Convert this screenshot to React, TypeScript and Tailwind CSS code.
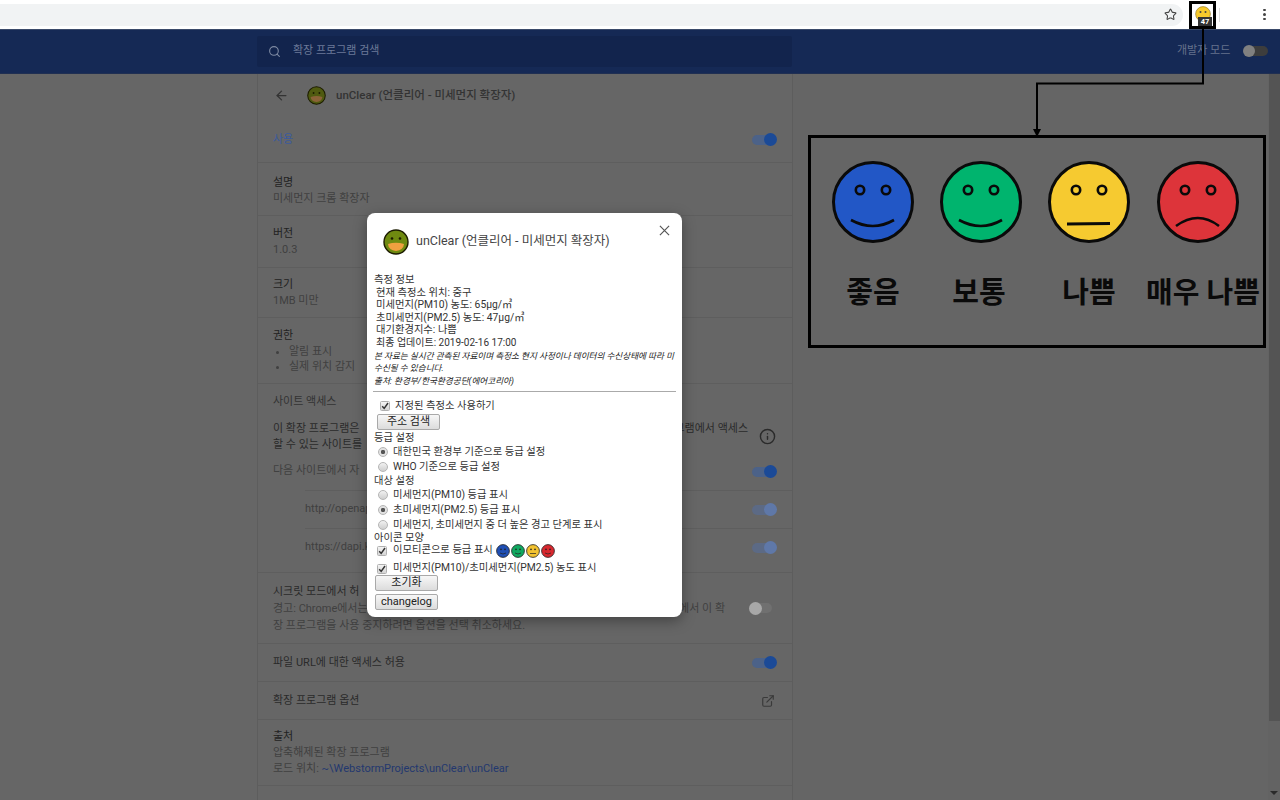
import { ArrowLeft, ExternalLink, Info, Search, Star } from "lucide-react";

const sans = "font-['Roboto','Noto_Sans_CJK_KR',sans-serif]";

function Toggle({ kind }: { kind: "on" | "dim" | "off" }) {
  const track = kind === "on" ? "bg-[#4c6288]" : kind === "dim" ? "bg-[#5c6a85]" : "bg-[#707070]";
  const knob = kind === "on" ? "bg-[#1b4a97] left-[12px]" : kind === "dim" ? "bg-[#5f78a8] left-[12px]" : "bg-[#a8a8a8] left-0";
  return (
    <div className={`relative w-[25px] h-[13px] shrink-0 ${kind === "off" ? "mr-[3px]" : ""}`}>
      <div className={`absolute left-0 top-[1.5px] w-[23px] h-[10px] rounded-full ${track}`} />
      <div className={`absolute top-0 w-[13px] h-[13px] rounded-full ${knob}`} />
    </div>
  );
}

// settings row, text on the left, control on the right
function Row({ h, children, right, line = true }: { h: string; children: React.ReactNode; right?: React.ReactNode; line?: boolean }) {
  return (
    <div className={`${h} flex items-center justify-between pl-[15px] pr-[15px] ${line ? "border-t border-[#5e5e5e]" : ""}`}>
      <div className="flex-1 leading-[16px]">{children}</div>
      {right}
    </div>
  );
}

function Face({ fill, mood }: { fill: string; mood: "good" | "flat" | "bad" }) {
  return (
    <svg viewBox="0 0 84 84" className="w-[84px] h-[84px] shrink-0">
      <circle cx="42" cy="42" r="39.5" fill={fill} stroke="#0a0a0a" strokeWidth="3" />
      <circle cx="29" cy="30" r="4.2" fill="none" stroke="#0a0a0a" strokeWidth="2.6" />
      <circle cx="55" cy="30" r="4.2" fill="none" stroke="#0a0a0a" strokeWidth="2.6" />
      {mood === "good" && <path d="M20 60 Q42 72 63 60" fill="none" stroke="#0a0a0a" strokeWidth="2.6" />}
      {mood === "flat" && <path d="M20 64 L63 63.5" fill="none" stroke="#0a0a0a" strokeWidth="2.8" />}
      {mood === "bad" && <path d="M20 66 Q42 50 63 66" fill="none" stroke="#0a0a0a" strokeWidth="2.6" />}
    </svg>
  );
}

function MiniFace({ fill, flat }: { fill: string; flat?: boolean }) {
  return (
    <svg viewBox="0 0 14 14" className="w-[14px] h-[14px] shrink-0">
      <circle cx="7" cy="7" r="6.4" fill={fill} stroke="#222" strokeWidth="0.8" />
      <circle cx="5" cy="5.4" r="0.8" fill="#222" />
      <circle cx="9" cy="5.4" r="0.8" fill="#222" />
      {flat ? <path d="M4 9.5 H10" stroke="#222" strokeWidth="0.7" /> : <path d="M4 9 Q7 11 10 9" fill="none" stroke="#222" strokeWidth="0.7" />}
    </svg>
  );
}

function MaskFace({ size, dark }: { size: string; dark?: boolean }) {
  return (
    <svg viewBox="0 0 26 26" className={size}>
      <circle cx="13" cy="13" r="12" fill={dark ? "#4f5a10" : "#6f8a10"} stroke="#1c1c00" strokeWidth="1.4" />
      <circle cx="9" cy="9.5" r="1.3" fill="#1c1c00" />
      <circle cx="17" cy="9.5" r="1.3" fill="#1c1c00" />
      <path d="M5 15 Q13 12.5 21 15 Q20.5 21 13 22 Q5.5 21 5 15 Z" fill={dark ? "#8a6238" : "#f0a040"} />
    </svg>
  );
}

function Opt({ type, on, h = "h-[15px]", ml, extra, children }: { type: "radio" | "checkbox"; on?: boolean; h?: string; ml: string; extra?: string; children: React.ReactNode }) {
  return (
    <label className={`flex items-center ${h} ${ml} ${extra ?? ""}`}>
      {type === "radio" ? (
        <input
          type="radio"
          defaultChecked={on}
          className="appearance-none w-[10px] h-[10px] m-0 mr-[5px] shrink-0 rounded-full border border-[#b5b5b5] bg-linear-to-b from-[#f2f2f2] to-[#cfcfcf] checked:bg-[radial-gradient(circle,#555555_0,#555555_32%,#e2e2e2_45%)]"
        />
      ) : (
        <span className="relative w-[10px] h-[10px] mr-[5px] shrink-0">
          <input
            type="checkbox"
            defaultChecked={on}
            className="appearance-none block w-[10px] h-[10px] m-0 rounded-[1.5px] border border-[#b0b0b0] bg-linear-to-b from-[#f4f4f4] to-[#d4d4d4]"
          />
          <svg viewBox="0 0 10 10" className="absolute left-0 top-0 w-[10px] h-[10px] pointer-events-none">
            <path d="M2.2 5.2 L4.2 7.4 L8 2" fill="none" stroke="#333" strokeWidth="1.5" />
          </svg>
        </span>
      )}
      {children}
    </label>
  );
}

function OldButton({ w, children }: { w: string; children: React.ReactNode }) {
  return (
    <button className={`${w} h-[16px] block text-center text-[11px] leading-[14px] text-[#222] bg-linear-to-b from-[#f7f7f7] to-[#dcdcdc] border border-[#a9a9a9] rounded-[2px]`}>
      {children}
    </button>
  );
}

function Popup() {
  return (
    <div className="absolute left-[367px] top-[213px] w-[315px] h-[404px] bg-white rounded-[8px] shadow-[0_4px_14px_rgba(0,0,0,0.35)] text-[10.3px] leading-[12.6px] text-[#333] pl-[7px] pr-[7px]">
      <div className="h-[61px] flex items-center pl-[9px] pb-[4px] relative">
        <MaskFace size="w-[26px] h-[26px]" />
        <span className="ml-[7px] text-[12.5px] text-[#444]">unClear (언클리어 - 미세먼지 확장자)</span>
        <svg viewBox="0 0 12 12" className="absolute right-[5px] top-[12px] w-[11px] h-[11px]">
          <path d="M1 1 L11 11 M11 1 L1 11" stroke="#555" strokeWidth="1.3" />
        </svg>
      </div>
      <div>측정 정보</div>
      <div className="pl-[2px]">
        <div>현재 측정소 위치: 중구</div>
        <div>미세먼지(PM10) 농도: 65μg/㎥</div>
        <div>초미세먼지(PM2.5) 농도: 47μg/㎥</div>
        <div>대기환경지수: 나쁨</div>
        <div className="text-[10px]">최종 업데이트: 2019-02-16 17:00</div>
      </div>
      <div className="text-[8.6px] italic text-[#222]">
        <div>본 자료는 실시간 관측된 자료이며 측정소 현지 사정이나 데이터의 수신상태에 따라 미</div>
        <div>수신될 수 있습니다.</div>
        <div>출처: 환경부/한국환경공단(에어코리아)</div>
      </div>
      <div className="h-px bg-[#aaa] mt-[4px] mb-[6px] -mx-[1px]" />
      <Opt type="checkbox" on ml="ml-[6px]">지정된 측정소 사용하기</Opt>
      <div className="ml-[3px] mt-[1px] mb-[2px]">
        <OldButton w="w-[63px]">주소 검색</OldButton>
      </div>
      <div>등급 설정</div>
      <Opt type="radio" on ml="ml-[4px]">대한민국 환경부 기준으로 등급 설정</Opt>
      <Opt type="radio" ml="ml-[4px]">WHO 기준으로 등급 설정</Opt>
      <div>대상 설정</div>
      <Opt type="radio" ml="ml-[4px]">미세먼지(PM10) 등급 표시</Opt>
      <Opt type="radio" on ml="ml-[4px]">초미세먼지(PM2.5) 등급 표시</Opt>
      <Opt type="radio" ml="ml-[4px]">미세먼지, 초미세먼지 중 더 높은 경고 단계로 표시</Opt>
      <div className="-mt-[1px]">아이콘 모양</div>
      <Opt type="checkbox" on ml="ml-[3px]" extra="-mt-[1px]">
        <span className="ml-[1px]">이모티콘으로 등급 표시</span>
        <span className="flex ml-[3px] gap-[1px]">
          <MiniFace fill="#1f4fb4" />
          <MiniFace fill="#10a860" />
          <MiniFace fill="#f2c230" flat />
          <MiniFace fill="#d8282e" />
        </span>
      </Opt>
      <Opt type="checkbox" on ml="ml-[3px]" h="h-[17px]" extra="mt-[2px]">
        <span className="ml-[1px]">미세먼지(PM10)/초미세먼지(PM2.5) 농도 표시</span>
      </Opt>
      <div className="ml-[1px] -mt-[2px] flex flex-col gap-[3px]">
        <OldButton w="w-[63px]">초기화</OldButton>
        <OldButton w="w-[63px]">changelog</OldButton>
      </div>
    </div>
  );
}

function Annotation() {
  return (
    <>
      <svg viewBox="0 0 1280 800" className="absolute inset-0 w-[1280px] h-[800px] pointer-events-none">
        <path d="M1203 29 V83.5 H1037 V130" fill="none" stroke="#000" strokeWidth="2" />
        <path d="M1033 129 H1041 L1037 137 Z" fill="#000" />
      </svg>
      <div className="absolute left-[808px] top-[135px] w-[458px] h-[213px] border-[3px] border-black">
        <div className="flex pl-[20px] pt-[22px] gap-[24px]">
          <Face fill="#2257c6" mood="good" />
          <Face fill="#00b46e" mood="good" />
          <Face fill="#f6ca30" mood="flat" />
          <div className="ml-[1px]">
            <Face fill="#dd343a" mood="bad" />
          </div>
        </div>
        <div className="flex pl-[9px] mt-[31px] text-[29px] leading-[36px] font-bold text-[#0a0a0a] whitespace-nowrap text-center">
          <span className="w-[106px]">좋음</span>
          <span className="w-[106px]">보통</span>
          <span className="w-[114px]">나쁨</span>
          <span className="w-[112px]">매우 나쁨</span>
        </div>
      </div>
    </>
  );
}

export default function App() {
  return (
    <div className={`relative w-[1280px] h-[800px] overflow-hidden flex flex-col bg-[#666666] ${sans} text-[11px] text-[#404040]`}>
      {/* browser toolbar */}
      <div className="h-[30px] shrink-0 bg-white flex items-center border-b border-[#3a4a6a]">
        <div className="w-[1183px] h-[22px] bg-[#f1f3f4] rounded-r-full flex items-center justify-end pr-[6px]">
          <Star className="w-[13px] h-[13px] text-[#444]" />
        </div>
        <div className="relative ml-[6px] w-[27px] h-[28px] border-[3px] border-black bg-white flex items-start justify-center">
          <svg viewBox="0 0 16 16" className="w-[16px] h-[16px] mt-[2px]">
            <circle cx="8" cy="8" r="7.4" fill="#f6c92c" stroke="#8a7020" strokeWidth="0.6" />
            <circle cx="5.5" cy="6" r="1" fill="#444" />
            <circle cx="10.5" cy="6" r="1" fill="#444" />
          </svg>
          <span className="absolute left-[6px] bottom-0 w-[14px] h-[9px] bg-[#333] text-white text-[7.5px] leading-[9px] text-center font-bold">47</span>
        </div>
        <div className="w-px h-[14px] bg-[#ddd] ml-[3px]" />
        <div className="ml-[43px] flex flex-col gap-[2px]">
          <i className="w-[2.5px] h-[2.5px] rounded-full bg-[#444]" />
          <i className="w-[2.5px] h-[2.5px] rounded-full bg-[#444]" />
          <i className="w-[2.5px] h-[2.5px] rounded-full bg-[#444]" />
        </div>
      </div>

      {/* extensions page header */}
      <div className="h-[44px] shrink-0 bg-[#152955] flex items-center border-b border-[#202f52]">
        <div className="w-[257px] shrink-0" />
        <div className="w-[535px] h-[31px] bg-[#12244d] rounded-[2px] flex items-center pl-[11px] text-[#6c7a98]">
          <Search className="w-[13px] h-[13px] text-[#7f8ba3]" />
          <span className="ml-[12px]">확장 프로그램 검색</span>
        </div>
        <span className="ml-[385px] text-[#66728c]">개발자 모드</span>
        <div className="ml-[13px]">
          <div className="relative w-[25px] h-[13px]">
            <div className="absolute left-[2px] top-[1px] w-[23px] h-[10px] rounded-full bg-[#3d3d3d]" />
            <div className="absolute left-0 top-0 w-[12px] h-[12px] rounded-full bg-[#808080]" />
          </div>
        </div>
      </div>

      {/* body */}
      <div className="flex-1 flex min-h-0">
        <div className="w-[257px] shrink-0" />
        <div className="w-[536px] shrink-0 border-x border-[#5d5d5d] bg-[#666666] overflow-hidden">
          <div className="h-[43px] flex items-center pl-[16px] text-[12px] font-medium text-[#333]">
            <ArrowLeft className="w-[15px] h-[15px] text-[#333]" />
            <div className="ml-[18px] flex items-center">
              <MaskFace size="w-[19px] h-[19px]" dark />
            </div>
            <span className="ml-[10px] text-[11.5px]">unClear (언클리어 - 미세먼지 확장자)</span>
          </div>
          <Row h="h-[45px]" line={false} right={<Toggle kind="on" />}>
            <span className="text-[#3b5a9d]">사용</span>
          </Row>
          <Row h="h-[53px]">
            <div className="mt-[3px] text-[#222]">설명</div>
            <div>미세먼지 크롬 확장자</div>
          </Row>
          <Row h="h-[52px]">
            <div className="text-[#222]">버전</div>
            <div>1.0.3</div>
          </Row>
          <Row h="h-[50px]">
            <div className="text-[#222]">크기</div>
            <div>1MB 미만</div>
          </Row>
          <Row h="h-[66px]">
            <div className="text-[#222]">권한</div>
            <ul className="list-disc pl-[16px] leading-[15px]">
              <li>알림 표시</li>
              <li>실제 위치 감지</li>
            </ul>
          </Row>
          <div className="h-[189px] border-t border-[#5e5e5e] flex flex-col">
            <div className="h-[36px] pl-[15px] flex items-center text-[#333]">사이트 액세스</div>
            <div className="h-[33px] pl-[15px] pr-[15px] flex items-center justify-between">
              <div className="w-[475px] leading-[16px] text-[#2a2a2a]">
                <div className="flex justify-between">
                  <span className="whitespace-nowrap">이 확장 프로그램은</span>
                  <span>프로그램에서 액세스</span>
                </div>
                <div className="whitespace-nowrap">할 수 있는 사이트를</div>
              </div>
              <Info className="w-[17px] h-[17px] text-[#2a2a2a] mr-[1px]" />
            </div>
            <div className="h-[37px] pl-[15px] pr-[15px] flex items-center justify-between">
              <span className="whitespace-nowrap">다음 사이트에서 자</span>
              <Toggle kind="on" />
            </div>
            <div className="h-[38px] ml-[47px] pr-[15px] flex items-center justify-between border-t border-[#5e5e5e]">
              <span className="whitespace-nowrap">http://openap</span>
              <Toggle kind="dim" />
            </div>
            <div className="h-[38px] ml-[47px] pr-[15px] flex items-center justify-between border-t border-[#5e5e5e]">
              <span className="whitespace-nowrap">https://dapi.k</span>
              <Toggle kind="dim" />
            </div>
          </div>
          <div className="h-[71px] pl-[15px] pr-[15px] flex items-center justify-between border-t border-[#5e5e5e]">
            <div className="w-[452px] leading-[17px]">
              <div className="whitespace-nowrap text-[#2a2a2a]">시크릿 모드에서 허</div>
              <div className="flex justify-between">
                <span className="whitespace-nowrap">경고: Chrome에서는</span>
                <span>에서 이 확</span>
              </div>
              <div>장 프로그램을 사용 중지하려면 옵션을 선택 취소하세요.</div>
            </div>
            <Toggle kind="off" />
          </div>
          <Row h="h-[38px]" right={<Toggle kind="on" />}>
            <span className="text-[#2a2a2a]">파일 URL에 대한 액세스 허용</span>
          </Row>
          <Row h="h-[38px]" right={<ExternalLink className="w-[14px] h-[14px] text-[#3a3a3a] mr-[2px]" />}>
            <span className="text-[#2a2a2a]">확장 프로그램 옵션</span>
          </Row>
          <Row h="h-[66px]">
            <div className="text-[#222]">출처</div>
            <div>압축해제된 확장 프로그램</div>
            <div>
              로드 위치: <span className="text-[#23386f]">~\WebstormProjects\unClear\unClear</span>
            </div>
          </Row>
          <div className="border-t border-[#5e5e5e]" />
        </div>
        <div className="flex-1 bg-[#656565]" />
        <div className="w-[12px] shrink-0 bg-[#636363] flex flex-col items-center">
          <div className="w-[11px] h-[647px] bg-[#545454]" />
          <div className="mt-auto mb-[5px] w-0 h-0 border-x-[4px] border-x-transparent border-t-[4px] border-t-[#2a2a2a]" />
        </div>
      </div>

      <Popup />
      <Annotation />
    </div>
  );
}
